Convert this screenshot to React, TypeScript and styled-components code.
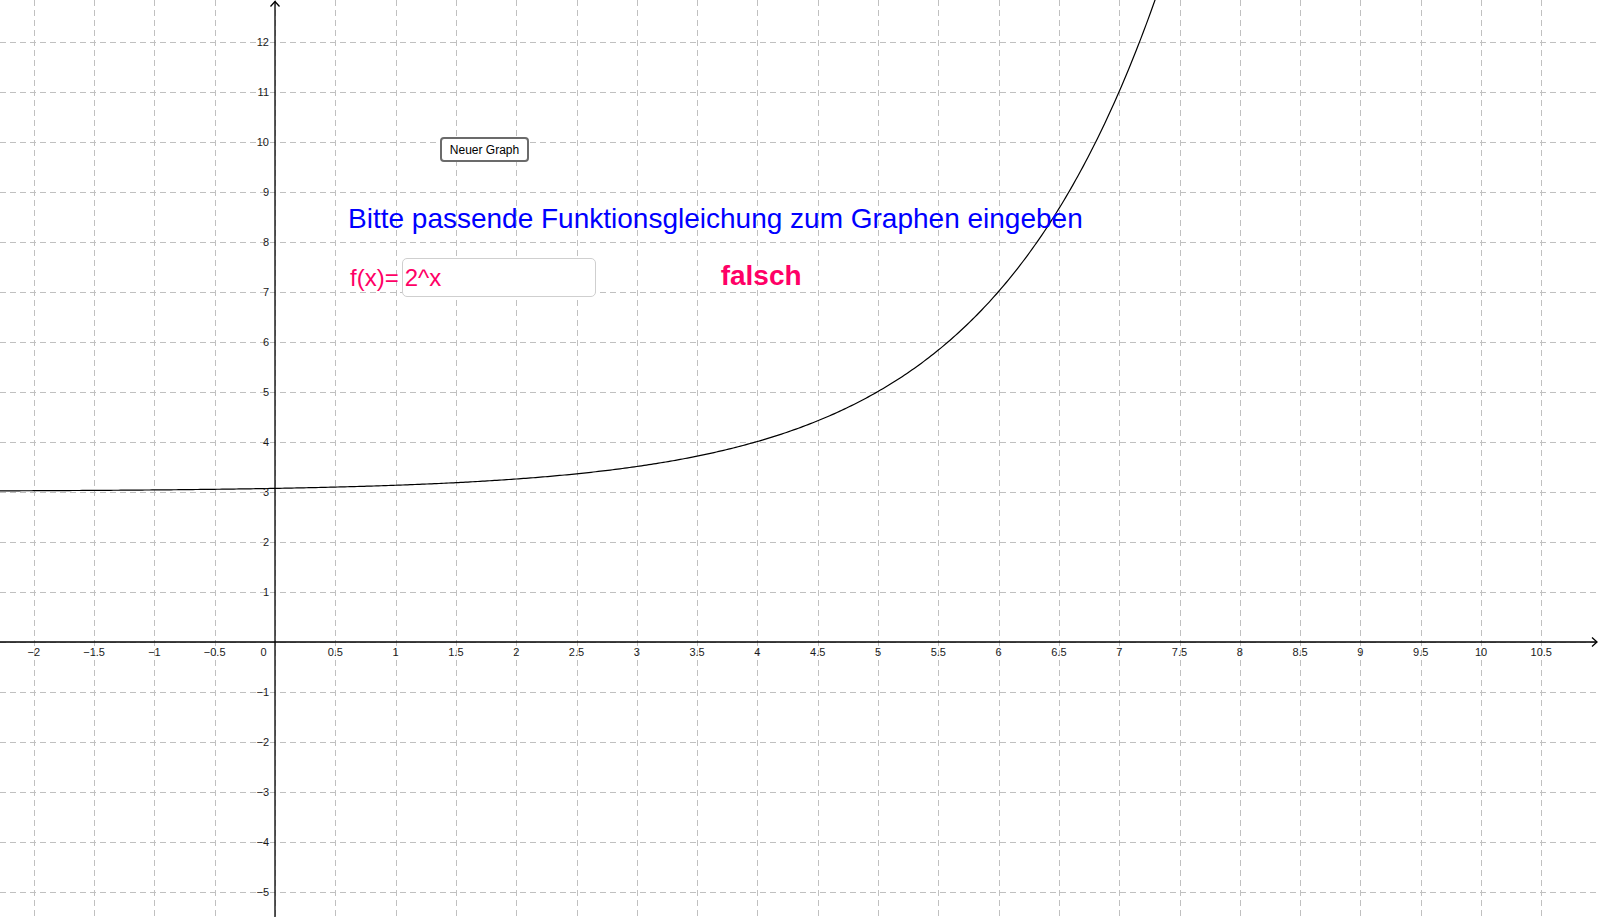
import React from "react";
import styled, { createGlobalStyle } from "styled-components";

const W = 1600;
const H = 917;
const OX = 275;
const OY = 641.5;
const SX = 120.6;
const SY = 50;
const px = (x: number) => OX + x * SX;
const py = (y: number) => OY - y * SY;
const crisp = (v: number) => Math.round(v) + 0.5;

const FONT = `"Liberation Sans", Arial, sans-serif`;
const PINK = "#ff0066";

const GlobalStyle = createGlobalStyle`
  html, body {
    margin: 0;
    padding: 0;
    background: #ffffff;
    overflow: hidden;
  }
  body {
    font-family: ${FONT};
  }
`;

const Stage = styled.div`
  position: relative;
  width: ${W}px;
  height: ${H}px;
  overflow: hidden;
  background: #ffffff;
`;

const Plot = styled.svg`
  display: block;
`;

const GridLine = styled.line`
  stroke: #c0c0c0;
  stroke-width: 1;
  stroke-dasharray: 6 4;
  shape-rendering: crispEdges;
`;

const AxisLine = styled.path`
  stroke: #000000;
  stroke-width: 1.3;
  fill: none;
`;

const Curve = styled.path`
  stroke: #000000;
  stroke-width: 1.2;
  fill: none;
  stroke-linejoin: round;
`;

const AxisLabel = styled.text<{ $anchor: "start" | "middle" | "end" }>`
  font-family: ${FONT};
  font-size: 11px;
  fill: #1a1a1a;
  text-anchor: ${(p) => p.$anchor};
`;

const Overlay = styled.div`
  position: absolute;
  inset: 0;
  padding: 137px 0 0 350px;
  display: flex;
  flex-direction: column;
  align-items: flex-start;
`;

const GraphButton = styled.button`
  margin-left: 90px;
  width: 89px;
  height: 25px;
  box-sizing: border-box;
  border: 2px solid #6b6b6b;
  border-radius: 4px;
  background: #ffffff;
  color: #000000;
  font-family: ${FONT};
  font-size: 12px;
  padding: 0;
  cursor: pointer;
`;

const Prompt = styled.div`
  margin: 41px 0 0 -2px;
  font-size: 28px;
  line-height: 32px;
  color: #0000ff;
  white-space: nowrap;
`;

const AnswerRow = styled.div`
  display: flex;
  align-items: flex-start;
  margin-top: 23px;
`;

const FnLabel = styled.span`
  font-size: 24px;
  line-height: 40px;
  color: ${PINK};
`;

const AnswerInput = styled.input`
  margin-left: 3px;
  width: 194px;
  height: 39px;
  box-sizing: border-box;
  border: 1px solid #cfcfcf;
  border-radius: 5px;
  padding: 1px 0 0 2px;
  font-family: ${FONT};
  font-size: 24px;
  color: ${PINK};
  background: #ffffff;
  outline: none;
`;

const Verdict = styled.span`
  margin: -2px 0 0 125px;
  font-size: 28px;
  font-weight: bold;
  line-height: 40px;
  color: ${PINK};
`;

const fmt = (v: number) => {
  const a = Math.abs(v);
  const s = Number.isInteger(a) ? String(a) : a.toFixed(1);
  return v < 0 ? "\u2212" + s : s;
};

const xSteps: number[] = [];
for (let k = -4; k <= 21; k++) xSteps.push(k);
const ySteps: number[] = [];
for (let k = -5; k <= 12; k++) ySteps.push(k);

const f = (x: number) => Math.pow(2, x - 4) + 3;
const curvePath = (() => {
  const pts: string[] = [];
  for (let x = -2.4; x <= 7.42; x += 0.02) {
    pts.push(`${px(x).toFixed(2)},${py(f(x)).toFixed(2)}`);
  }
  return "M" + pts.join(" L");
})();

export default function App() {
  const ax = crisp(OX) - 0.5;
  const ay = crisp(OY) - 0.5;
  return (
    <>
      <GlobalStyle />
      <Stage>
        <Plot width={W} height={H} viewBox={`0 0 ${W} ${H}`}>
          {xSteps.map((k) => (
            <GridLine key={`vx${k}`} x1={crisp(px(k * 0.5))} x2={crisp(px(k * 0.5))} y1={0} y2={H} />
          ))}
          {ySteps.map((k) => (
            <GridLine key={`hy${k}`} x1={0} x2={W} y1={crisp(py(k))} y2={crisp(py(k))} />
          ))}
          <AxisLine d={`M0,${ay} L${W - 3},${ay}`} />
          <AxisLine d={`M${W - 8},${ay - 4.5} L${W - 3},${ay} L${W - 8},${ay + 4.5}`} />
          <AxisLine d={`M${ax},${H} L${ax},1.5`} />
          <AxisLine d={`M${ax - 4.5},6.5 L${ax},1.5 L${ax + 4.5},6.5`} />
          <Curve d={curvePath} />
          {xSteps
            .filter((k) => k !== 0)
            .map((k) => (
              <AxisLabel key={`lx${k}`} $anchor="middle" x={px(k * 0.5)} y={OY + 14.5}>
                {fmt(k * 0.5)}
              </AxisLabel>
            ))}
          <AxisLabel $anchor="end" x={OX - 8.5} y={OY + 14.5}>
            0
          </AxisLabel>
          {ySteps
            .filter((k) => k !== 0)
            .map((k) => (
              <AxisLabel key={`ly${k}`} $anchor="end" x={OX - 6} y={py(k) + 4}>
                {fmt(k)}
              </AxisLabel>
            ))}
        </Plot>
        <Overlay>
          <GraphButton type="button">Neuer Graph</GraphButton>
          <Prompt>Bitte passende Funktionsgleichung zum Graphen eingeben</Prompt>
          <AnswerRow>
            <FnLabel>f(x)=</FnLabel>
            <AnswerInput defaultValue="2^x" spellCheck={false} />
            <Verdict>falsch</Verdict>
          </AnswerRow>
        </Overlay>
      </Stage>
    </>
  );
}
